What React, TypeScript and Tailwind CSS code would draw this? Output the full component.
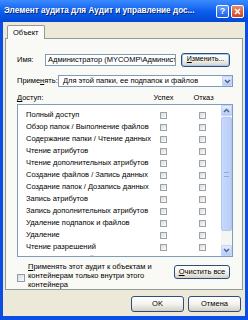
import React from 'react';

const rights = [
  'Полный доступ',
  'Обзор папок / Выполнение файлов',
  'Содержание папки / Чтение данных',
  'Чтение атрибутов',
  'Чтение дополнительных атрибутов',
  'Создание файлов / Запись данных',
  'Создание папок / Дозапись данных',
  'Запись атрибутов',
  'Запись дополнительных атрибутов',
  'Удаление подпапок и файлов',
  'Удаление',
  'Чтение разрешений',
  'Смена разрешений',
];

const Box: React.FC = () => (
  <span className="block w-[7px] h-[7px] shrink-0 border border-[#9aa3ad] bg-gradient-to-br from-[#dcdcd6] to-[#fbfbf9]" />
);

const XpButton: React.FC<{ className?: string; children: React.ReactNode }> = ({ className = '', children }) => (
  <div
    className={`flex items-center justify-center rounded-[3px] border border-[#2d4e7c] bg-gradient-to-b from-[#ffffff] via-[#f4f3ee] to-[#d6d0c5] text-black whitespace-nowrap ${className}`}
  >
    {children}
  </div>
);

const Chevron: React.FC<{ up?: boolean }> = ({ up }) => (
  <svg width="7" height="5" viewBox="0 0 7 5">
    <path d={up ? 'M1 4 L3.5 1.5 L6 4' : 'M1 1 L3.5 3.5 L6 1'} fill="none" stroke="#4d6185" strokeWidth="1.4" />
  </svg>
);

export default function App() {
  return (
    <div className="w-[248px] h-[320px] overflow-hidden flex flex-col bg-[#0a4ee4] font-['Liberation_Sans',Arial,sans-serif] text-black">
      {/* Title bar */}
      <div className="h-[22px] shrink-0 flex items-center pl-[4px] pr-[4px] bg-gradient-to-b from-[#3d8bff] via-[#0a5fee] to-[#0547d4]">
        <span className="flex-1 text-white text-[8.2px] font-bold whitespace-nowrap overflow-hidden [text-shadow:1px_1px_0_#0a1f6a]">
          Элемент аудита для Аудит и управление дос...
        </span>
        <div className="w-[13px] h-[13px] ml-[2px] rounded-[2px] border border-white bg-gradient-to-b from-[#5c9aff] to-[#1f5fe6] flex items-center justify-center text-white text-[9px] font-bold leading-none">
          ?
        </div>
        <div className="w-[13px] h-[13px] ml-[2px] rounded-[2px] border border-white bg-gradient-to-b from-[#f08a5e] to-[#d2411c] flex items-center justify-center">
          <svg width="7" height="7" viewBox="0 0 7 7">
            <path d="M1 1 L6 6 M6 1 L1 6" stroke="#fff" strokeWidth="1.6" />
          </svg>
        </div>
      </div>

      {/* Body */}
      <div className="flex-1 mx-[3px] mb-[4px] bg-[#ece9d8] flex flex-col">
        {/* Tab strip */}
        <div className="h-[16px] pt-[3px] pl-[4px] flex items-end">
          <div className="h-[14px] px-[5px] flex items-center border border-b-0 border-[#919b9c] rounded-t-[2px] bg-[#fcfcfb] text-[7.5px] relative top-[1px]">
            Объект
          </div>
        </div>

        {/* Panel */}
        <div className="mx-[2px] h-[252px] border border-[#919b9c] bg-[#f9f9f6] pl-[11px] pr-[9px] pt-[14px] flex flex-col">
          {/* Name row */}
          <div className="h-[13px] flex items-center">
            <span className="w-[28px] text-[7.5px]">Имя:</span>
            <div className="w-[131px] h-[12px] border border-[#7f9db9] bg-white flex items-center px-[2px] text-[7.5px] whitespace-nowrap overflow-hidden">
              Администратор (MYCOMP\Админист
            </div>
            <XpButton className="ml-[5px] w-[49px] h-[14px] text-[7px] shadow-[inset_0_0_0_1px_#a8c6f2]">
              <span>
                <span className="underline">И</span>зменить...
              </span>
            </XpButton>
          </div>

          {/* Apply row */}
          <div className="h-[12px] mt-[9px] flex items-center">
            <span className="w-[41px] text-[7.5px] whitespace-nowrap">
              Приме<span className="underline">н</span>ять:
            </span>
            <div className="flex-1 h-[12px] border border-[#7f9db9] bg-white flex items-center">
              <span className="flex-1 pl-[4px] text-[7.5px] whitespace-nowrap overflow-hidden">Для этой папки, ее подпапок и файлов</span>
              <div className="w-[10px] h-[10px] bg-gradient-to-b from-[#e2ecfe] to-[#b7cbf6] border border-[#c3d3fd] rounded-[1px] flex items-center justify-center">
                <Chevron />
              </div>
            </div>
          </div>

          {/* Header row */}
          <div className="h-[10px] mt-[6px] flex items-center text-[7.5px]">
            <span className="w-[133px]">
              <span className="underline">Д</span>оступ:
            </span>
            <span className="w-[27px] text-center">Успех</span>
            <span className="w-[13px]" />
            <span className="w-[27px] text-center">Отказ</span>
          </div>

          {/* List */}
          <div className="h-[153px] mt-[1px] border border-[#7f9db9] bg-white flex overflow-hidden">
            <div className="flex-1 pt-[4px] pl-[8px] flex flex-col">
              {rights.map((r) => (
                <div key={r} className="h-[12px] shrink-0 flex items-center text-[7.5px] whitespace-nowrap">
                  <span className="w-[134px] overflow-hidden">{r}</span>
                  <Box />
                  <span className="w-[32px] shrink-0" />
                  <Box />
                </div>
              ))}
            </div>
            <div className="w-[11px] bg-[#f5f5f1] flex flex-col">
              <div className="h-[11px] bg-gradient-to-b from-[#e2ecfe] to-[#b7cbf6] border border-[#c3d3fd] rounded-[1px] flex items-center justify-center">
                <Chevron up />
              </div>
              <div className="h-[114px] mt-[1px] bg-gradient-to-r from-[#c9d8fc] to-[#b8cdf8] border border-[#b1c6f5] rounded-[2px] flex items-center justify-center">
                <span className="block w-[5px] h-[5px] border-y border-[#8faaee]" />
              </div>
              <div className="flex-1" />
              <div className="h-[11px] bg-gradient-to-b from-[#e2ecfe] to-[#b7cbf6] border border-[#c3d3fd] rounded-[1px] flex items-center justify-center">
                <Chevron />
              </div>
            </div>
          </div>

          {/* Bottom options */}
          <div className="mt-[5px] flex">
            <div className="pt-[12px]">
              <span className="block w-[8px] h-[8px] border border-[#8a9bb3] bg-gradient-to-br from-[#dcdcd6] to-[#fbfbf9]" />
            </div>
            <div className="ml-[3px] w-[142px] text-[7.5px] leading-[9px] whitespace-nowrap">
              <span className="underline">П</span>рименять этот аудит к объектам и
              <br />
              контейнерам только внутри этого
              <br />
              контейнера
            </div>
            <XpButton className="ml-[4px] mt-[3px] w-[56px] h-[14px] text-[7.5px]">
              <span>
                <span className="underline">О</span>чистить все
              </span>
            </XpButton>
          </div>
        </div>

        {/* Dialog buttons */}
        <div className="flex justify-end pr-[4px] mt-[6px] gap-[4px]">
          <XpButton className="w-[53px] h-[16px] text-[7.5px]">OK</XpButton>
          <XpButton className="w-[53px] h-[16px] text-[7.5px]">Отмена</XpButton>
        </div>
      </div>
    </div>
  );
}
